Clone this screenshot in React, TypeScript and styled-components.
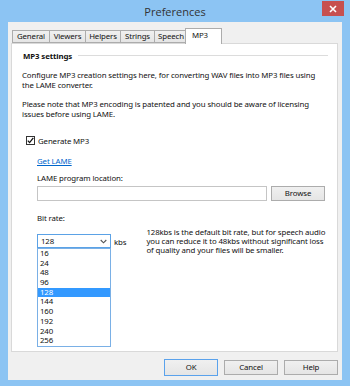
import styled, { createGlobalStyle } from "styled-components";

const GlobalStyle = createGlobalStyle`
  html, body {
    margin: 0;
    padding: 0;
    background: #8cc4f3;
  }
  * {
    box-sizing: border-box;
  }
`;

const Window = styled.div`
  width: 350px;
  height: 386px;
  background: #8cc4f3;
  display: flex;
  flex-direction: column;
  font-family: "Noto Sans", "Open Sans", sans-serif;
  font-size: 7.85px;
  letter-spacing: -0.12px;
  color: #111;
`;

const TitleBar = styled.div`
  height: 22px;
  display: grid;
  grid-template-columns: 1fr auto 1fr;
  align-items: start;
`;

const Title = styled.div`
  grid-column: 2;
  font-size: 11px;
  letter-spacing: 0;
  line-height: 24px;
  color: #333;
  font-family: "Open Sans", "Noto Sans", sans-serif;
`;

const CloseButton = styled.div`
  grid-column: 3;
  justify-self: end;
  margin: 1px 6px 0 0;
  width: 22px;
  height: 15px;
  background: #c7504f;
  display: flex;
  align-items: center;
  justify-content: center;
`;

const Client = styled.div`
  flex: 1;
  margin: 0 8px 6px 8px;
  background: #f0f0f0;
  display: flex;
  flex-direction: column;
  padding: 6px 4px 4px 3px;
`;

const Tabs = styled.div`
  display: flex;
  align-items: flex-end;
  height: 15px;
  padding-left: 1px;
`;

const Tab = styled.div<{ $active?: boolean; $w: number }>`
  width: ${({ $w }) => $w}px;
  height: ${({ $active }) => ($active ? 16 : 13)}px;
  margin: ${({ $active }) => ($active ? "0 -2px -1px -2px" : "0")};
  position: relative;
  z-index: ${({ $active }) => ($active ? 2 : 1)};
  border: 1px solid #acacac;
  border-bottom: ${({ $active }) => ($active ? "none" : "1px solid #acacac")};
  border-right: ${({ $active }) => ($active ? "1px solid #acacac" : "none")};
  background: ${({ $active }) =>
    $active ? "#fff" : "linear-gradient(#f0f0f0, #e5e5e5)"};
  display: flex;
  align-items: ${({ $active }) => ($active ? "flex-start" : "center")};
  justify-content: ${({ $active }) => ($active ? "flex-start" : "center")};
  padding: ${({ $active }) => ($active ? "1px 0 0 6px" : "0")};
  line-height: 11px;
  white-space: nowrap;
`;

const Panel = styled.div`
  flex: 1;
  background: #fff;
  border: 1px solid #d9d9d9;
  padding: 6px 9px 0 10px;
  display: flex;
  flex-direction: column;
`;

const GroupHeader = styled.div`
  display: flex;
  align-items: center;
  gap: 6px;
  height: 11px;
  padding-left: 1px;
  font-weight: bold;
`;

const GroupLine = styled.div`
  flex: 1;
  height: 1px;
  background: #dcdcdc;
`;

const Paragraph = styled.p<{ $top: number }>`
  margin: ${({ $top }) => $top}px 0 0 0;
  line-height: 9.5px;
  white-space: nowrap;
`;

const CheckRow = styled.label`
  display: flex;
  align-items: center;
  gap: 3px;
  margin: 16px 0 0 4px;
  height: 11px;
`;

const CheckBox = styled.span`
  width: 9px;
  height: 9px;
  border: 1px solid #333;
  background: #fff;
  display: flex;
  align-items: center;
  justify-content: center;
`;

const Indented = styled.div`
  padding-left: 15px;
  display: flex;
  flex-direction: column;
`;

const Link = styled.a`
  margin-top: 10px;
  color: #0066cc;
  text-decoration: underline;
  line-height: 11px;
  align-self: flex-start;
`;

const Label = styled.div<{ $top: number }>`
  margin-top: ${({ $top }) => $top}px;
  line-height: 11px;
`;

const InputRow = styled.div`
  display: flex;
  align-items: center;
  gap: 4px;
  margin-top: 2px;
`;

const TextInput = styled.div`
  width: 230px;
  height: 15px;
  border: 1px solid #c5c5c5;
  background: #fff;
`;

const Button = styled.div<{ $default?: boolean; $w: number }>`
  width: ${({ $w }) => $w}px;
  height: ${({ $default }) => ($default ? 17 : 15)}px;
  border: 1px solid ${({ $default }) => ($default ? "#5aa2ec" : "#acacac")};
  background: linear-gradient(#f0f0f0, #e5e5e5);
  display: flex;
  align-items: center;
  justify-content: center;
  line-height: 11px;
`;

const RateRow = styled.div`
  display: flex;
  align-items: flex-start;
  margin-top: 4px;
`;

const SelectWrap = styled.div`
  position: relative;
  margin-top: 6px;
`;

const SelectBox = styled.div`
  width: 74px;
  height: 14px;
  border: 1px solid #5ba2e6;
  background: #fff;
  display: flex;
  align-items: center;
  justify-content: space-between;
  padding: 0 3px 0 3px;
`;

const Unit = styled.span`
  margin: 9px 0 0 3px;
  line-height: 11px;
`;

const Help = styled.p`
  margin: 0 0 0 20px;
  line-height: 9px;
  white-space: nowrap;
`;

const DropList = styled.div`
  position: absolute;
  top: 14px;
  left: 0;
  width: 74px;
  background: #fff;
  border: 1px solid #7ab0e6;
  z-index: 5;
  display: flex;
  flex-direction: column;
`;

const DropItem = styled.div<{ $selected?: boolean }>`
  height: 9.7px;
  line-height: 9.7px;
  padding-left: 2px;
  background: ${({ $selected }) => ($selected ? "#3399ff" : "transparent")};
  color: ${({ $selected }) => ($selected ? "#fff" : "#111")};
`;

const ButtonRow = styled.div`
  display: flex;
  justify-content: flex-end;
  gap: 6px;
  margin-top: 7px;
  height: 17px;
  align-items: center;
`;

const tabs = [
  { name: "General", w: 37 },
  { name: "Viewers", w: 36 },
  { name: "Helpers", w: 35 },
  { name: "Strings", w: 34 },
  { name: "Speech", w: 33 },
  { name: "MP3", w: 37, active: true },
];

const rates = ["16", "24", "48", "96", "128", "144", "160", "192", "240", "256"];

export default function App() {
  return (
    <>
      <GlobalStyle />
      <Window>
        <TitleBar>
          <Title>Preferences</Title>
          <CloseButton>
            <svg width="8" height="8" viewBox="0 0 8 8">
              <path d="M1 1 L7 7 M7 1 L1 7" stroke="#fff" strokeWidth="1.6" />
            </svg>
          </CloseButton>
        </TitleBar>
        <Client>
          <Tabs>
            {tabs.map((t) => (
              <Tab key={t.name} $active={t.active} $w={t.w}>
                {t.name}
              </Tab>
            ))}
          </Tabs>
          <Panel>
            <GroupHeader>
              MP3 settings
              <GroupLine />
            </GroupHeader>
            <Paragraph $top={10}>
              Configure MP3 creation settings here, for converting WAV files into MP3 files using
              <br />
              the LAME converter.
            </Paragraph>
            <Paragraph $top={10}>
              Please note that MP3 encoding is patented and you should be aware of licensing
              <br />
              issues before using LAME.
            </Paragraph>
            <CheckRow>
              <CheckBox>
                <svg width="7" height="7" viewBox="0 0 7 7">
                  <path d="M0.8 3.6 L2.6 5.6 L6.3 0.9" stroke="#111" strokeWidth="1.3" fill="none" />
                </svg>
              </CheckBox>
              Generate MP3
            </CheckRow>
            <Indented>
              <Link>Get LAME</Link>
              <Label $top={6}>LAME program location:</Label>
              <InputRow>
                <TextInput />
                <Button $w={54}>Browse</Button>
              </InputRow>
              <Label $top={12}>Bit rate:</Label>
              <RateRow>
                <SelectWrap>
                  <SelectBox>
                    128
                    <svg width="7" height="5" viewBox="0 0 7 5">
                      <path d="M0.7 1 L3.5 3.8 L6.3 1" stroke="#555" strokeWidth="1.1" fill="none" />
                    </svg>
                  </SelectBox>
                  <DropList>
                    {rates.map((r) => (
                      <DropItem key={r} $selected={r === "128"}>
                        {r}
                      </DropItem>
                    ))}
                  </DropList>
                </SelectWrap>
                <Unit>kbs</Unit>
                <Help>
                  128kbs is the default bit rate, but for speech audio
                  <br />
                  you can reduce it to 48kbs without significant loss
                  <br />
                  of quality and your files will be smaller.
                </Help>
              </RateRow>
            </Indented>
          </Panel>
          <ButtonRow>
            <Button $default $w={54}>OK</Button>
            <Button $w={54}>Cancel</Button>
            <Button $w={54}>Help</Button>
          </ButtonRow>
        </Client>
      </Window>
    </>
  );
}
